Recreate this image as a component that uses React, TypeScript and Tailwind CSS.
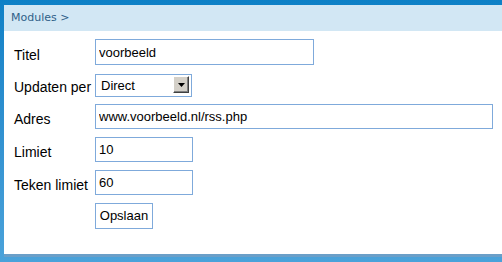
import { useState } from "react";

const labelCls = "w-[81px] shrink-0 whitespace-nowrap pt-[6px] text-[14px] text-black";
const inputCls =
  "h-full border border-[#7faadb] bg-white px-[3px] text-[13px] text-black outline-none font-['Liberation_Sans',Arial,sans-serif]";

function Row({ label, children, h = "h-[25px]" }: { label?: string; children: React.ReactNode; h?: string }) {
  return (
    <div className={`flex items-center ${h}`}>
      <div className={labelCls}>{label}</div>
      {children}
    </div>
  );
}

export default function App() {
  const [titel, setTitel] = useState("voorbeeld");
  const [adres, setAdres] = useState("www.voorbeeld.nl/rss.php");
  const [limiet, setLimiet] = useState("10");
  const [teken, setTeken] = useState("60");

  return (
    <div className="h-[262px] w-[502px] bg-gradient-to-b from-[#0c80c6] to-[#4aa2da] pt-[5px] pb-[5px] pl-[4px] font-['Liberation_Sans',Arial,sans-serif]">
      <div className="flex h-full flex-col border-b-[3px] border-[#6b9fc8] bg-white">
        <div className="flex h-[26px] items-center bg-[#d2e7f4] px-[7px] font-['DejaVu_Sans',Verdana,sans-serif] text-[11px] text-[#2f5f88]">
          Modules &gt;
        </div>

        <form className="flex flex-col gap-[8px] pt-[8px] pl-[10px]" onSubmit={(e) => e.preventDefault()}>
          <Row label="Titel" h="h-[26px]">
            <input className={`${inputCls} w-[219px]`} value={titel} onChange={(e) => setTitel(e.target.value)} />
          </Row>

          <Row label="Updaten per" h="h-[23px]">
            <div className="relative h-full w-[97px]">
              <select className="h-full w-full appearance-none border border-[#7faadb] bg-white px-[5px] text-[13px] text-black outline-none">
                <option>Direct</option>
                <option>Dagelijks</option>
                <option>Wekelijks</option>
              </select>
              <div className="pointer-events-none absolute top-[3px] right-[3px] flex h-[17px] w-[16px] items-center justify-center border border-t-white border-l-white border-r-[#404040] border-b-[#404040] bg-[#d4d0c8] shadow-[inset_-1px_-1px_0_#808080]">
                <svg width="7" height="4" viewBox="0 0 7 4">
                  <path d="M0 0h7L3.5 4z" fill="#000" />
                </svg>
              </div>
            </div>
          </Row>

          <Row label="Adres">
            <input className={`${inputCls} w-[398px]`} value={adres} onChange={(e) => setAdres(e.target.value)} />
          </Row>

          <Row label="Limiet">
            <input className={`${inputCls} w-[98px]`} value={limiet} onChange={(e) => setLimiet(e.target.value)} />
          </Row>

          <Row label="Teken limiet">
            <input className={`${inputCls} w-[98px]`} value={teken} onChange={(e) => setTeken(e.target.value)} />
          </Row>

          <Row h="h-[26px]">
            <button type="submit" className="h-full w-[58px] border border-[#7faadb] bg-white text-[13px] text-black">
              Opslaan
            </button>
          </Row>
        </form>
      </div>
    </div>
  );
}
